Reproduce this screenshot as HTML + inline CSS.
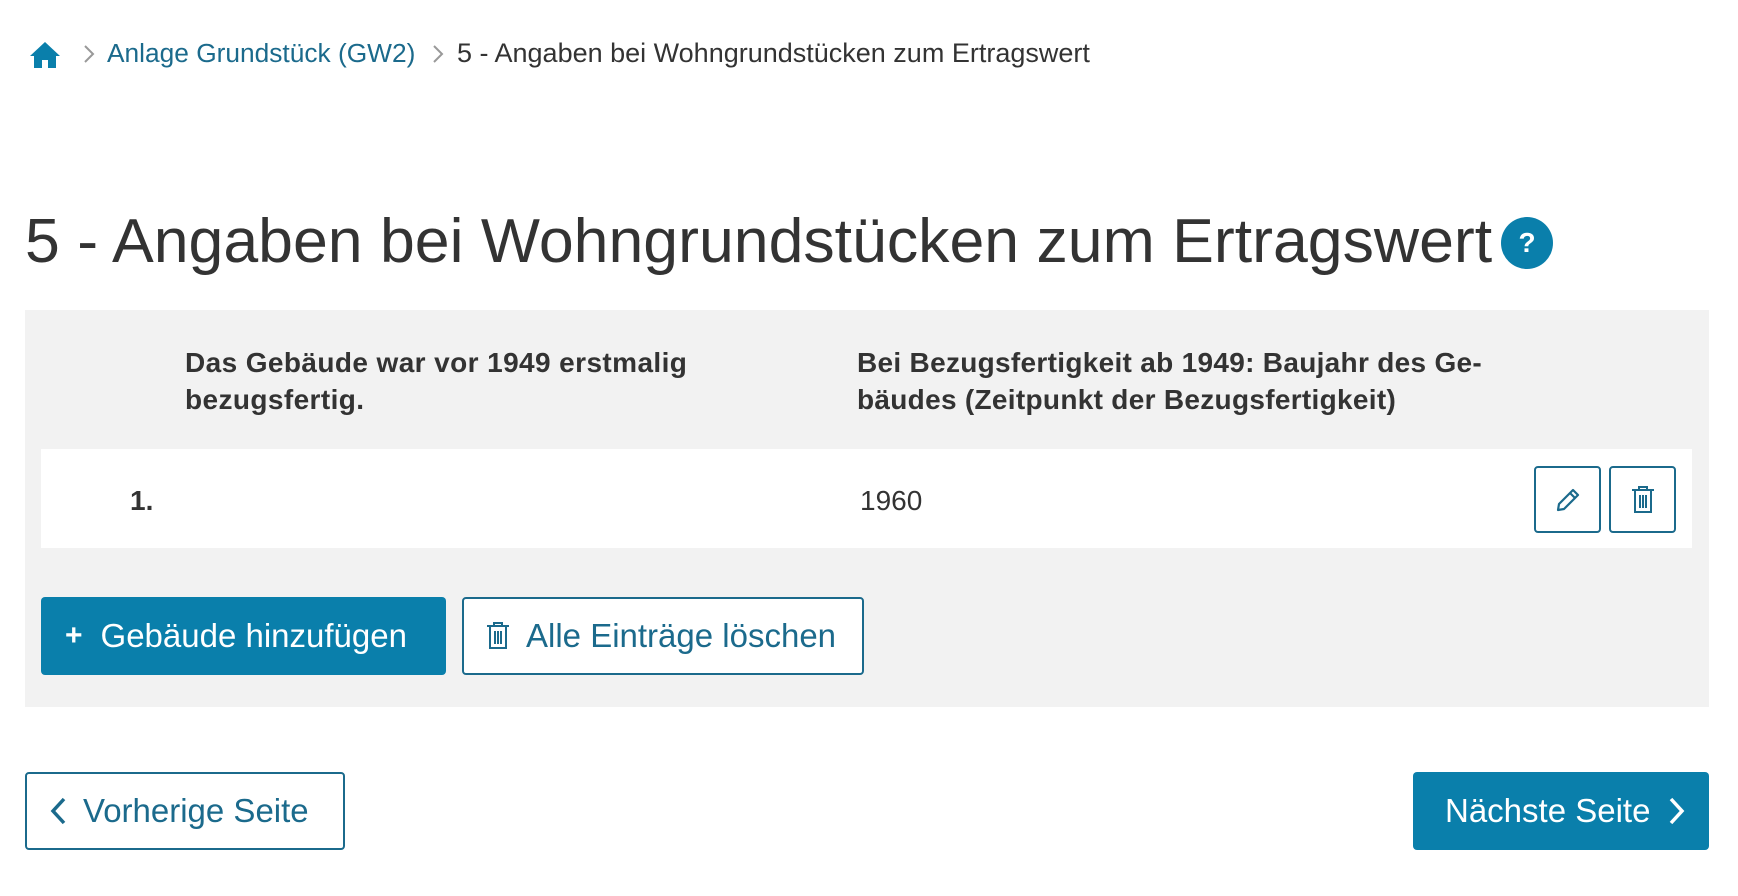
<!DOCTYPE html>
<html><head><meta charset="utf-8"><style>
*{margin:0;padding:0;box-sizing:border-box}
body{width:1738px;height:896px;background:#fff;font-family:"Liberation Sans",sans-serif;color:#333;position:relative;overflow:hidden}
.a{position:absolute;white-space:nowrap}
.btn{position:absolute;border-radius:4px;display:flex;align-items:center;font-size:33px}
.o{border:2px solid #1b6a8c;background:#fff;color:#1b6a8c}
.f{background:#0a7fab;color:#fff}
</style></head><body>
<svg class="a" style="left:29px;top:41px" width="32" height="28" viewBox="0 0 32 28"><path d="M16 1 L31 15 H27 V27 H19 V19 H13 V27 H5 V15 H1 Z" fill="#0a7fab"/></svg>
<svg class="a" style="left:83px;top:44px" width="12" height="20" viewBox="0 0 12 20"><path d="M2 2 L10 10 L2 18" fill="none" stroke="#999" stroke-width="2"/></svg>
<div class="a" style="left:107px;top:38px;font-size:26.3px;color:#1b6a8c">Anlage Grundstück (GW2)</div>
<svg class="a" style="left:432px;top:44px" width="12" height="20" viewBox="0 0 12 20"><path d="M2 2 L10 10 L2 18" fill="none" stroke="#999" stroke-width="2"/></svg>
<div class="a" style="left:457px;top:38px;font-size:27px;color:#333">5 - Angaben bei Wohngrundstücken zum Ertragswert</div>
<div class="a" style="left:25px;top:205px;font-size:62.6px;color:#333">5 - Angaben bei Wohngrundstücken zum Ertragswert</div>
<div class="a" style="left:1501px;top:217px;width:52px;height:52px;border-radius:50%;background:#0a7fab;color:#fff;font-weight:bold;font-size:28px;text-align:center;line-height:52px">?</div>
<div class="a" style="left:25px;top:310px;width:1684px;height:397px;background:#f2f2f2"></div>
<div class="a" style="left:185px;top:344px;font-size:28px;letter-spacing:0.4px;font-weight:bold;line-height:37px">Das Gebäude war vor 1949 erstmalig<br>bezugsfertig.</div>
<div class="a" style="left:857px;top:344px;font-size:28px;letter-spacing:0.3px;font-weight:bold;line-height:37px">Bei Bezugsfertigkeit ab 1949: Baujahr des Ge-<br>bäudes (Zeitpunkt der Bezugsfertigkeit)</div>
<div class="a" style="left:41px;top:449px;width:1651px;height:99px;background:#fff"></div>
<div class="a" style="left:130px;top:485px;font-size:28px;font-weight:bold">1.</div>
<div class="a" style="left:860px;top:485px;font-size:28px">1960</div>
<div class="btn o" style="left:1534px;top:466px;width:67px;height:67px;justify-content:center"><svg width="28" height="28" viewBox="0 0 28 28"><path d="M4 24 L5 18 L19 4 L24 9 L10 23 Z M16 7 L21 12" fill="none" stroke="#1b6a8c" stroke-width="2.2" stroke-linejoin="round"/></svg></div>
<div class="btn o" style="left:1609px;top:466px;width:67px;height:67px;justify-content:center"><svg width="28" height="30" viewBox="0 0 28 30"><path d="M3 5 H25 M10 5 V2 H18 V5 M6 6 V27 H22 V6 M11 10 V23 M14 10 V23 M17 10 V23" fill="none" stroke="#1b6a8c" stroke-width="2"/></svg></div>
<div class="btn f" style="left:41px;top:597px;width:405px;height:78px;padding-left:24px"><span style="font-weight:bold;font-size:30px;margin-right:18px">+</span>Gebäude hinzufügen</div>
<div class="btn o" style="left:462px;top:597px;width:402px;height:78px;padding-left:20px"><svg width="28" height="30" viewBox="0 0 28 30" style="margin-right:14px"><path d="M3 5 H25 M10 5 V2 H18 V5 M6 6 V27 H22 V6 M11 10 V23 M14 10 V23 M17 10 V23" fill="none" stroke="#1b6a8c" stroke-width="2"/></svg>Alle Einträge löschen</div>
<div class="btn o" style="left:25px;top:772px;width:320px;height:78px;padding-left:22px"><svg width="20" height="30" viewBox="0 0 20 30" style="margin-right:14px"><path d="M15 3 L4 15 L15 27" fill="none" stroke="#1b6a8c" stroke-width="3.5"/></svg>Vorherige Seite</div>
<div class="btn f" style="left:1413px;top:772px;width:296px;height:78px;padding-left:32px">Nächste Seite<svg width="20" height="30" viewBox="0 0 20 30" style="margin-left:16px"><path d="M5 3 L16 15 L5 27" fill="none" stroke="#fff" stroke-width="3.5"/></svg></div>
</body></html>
